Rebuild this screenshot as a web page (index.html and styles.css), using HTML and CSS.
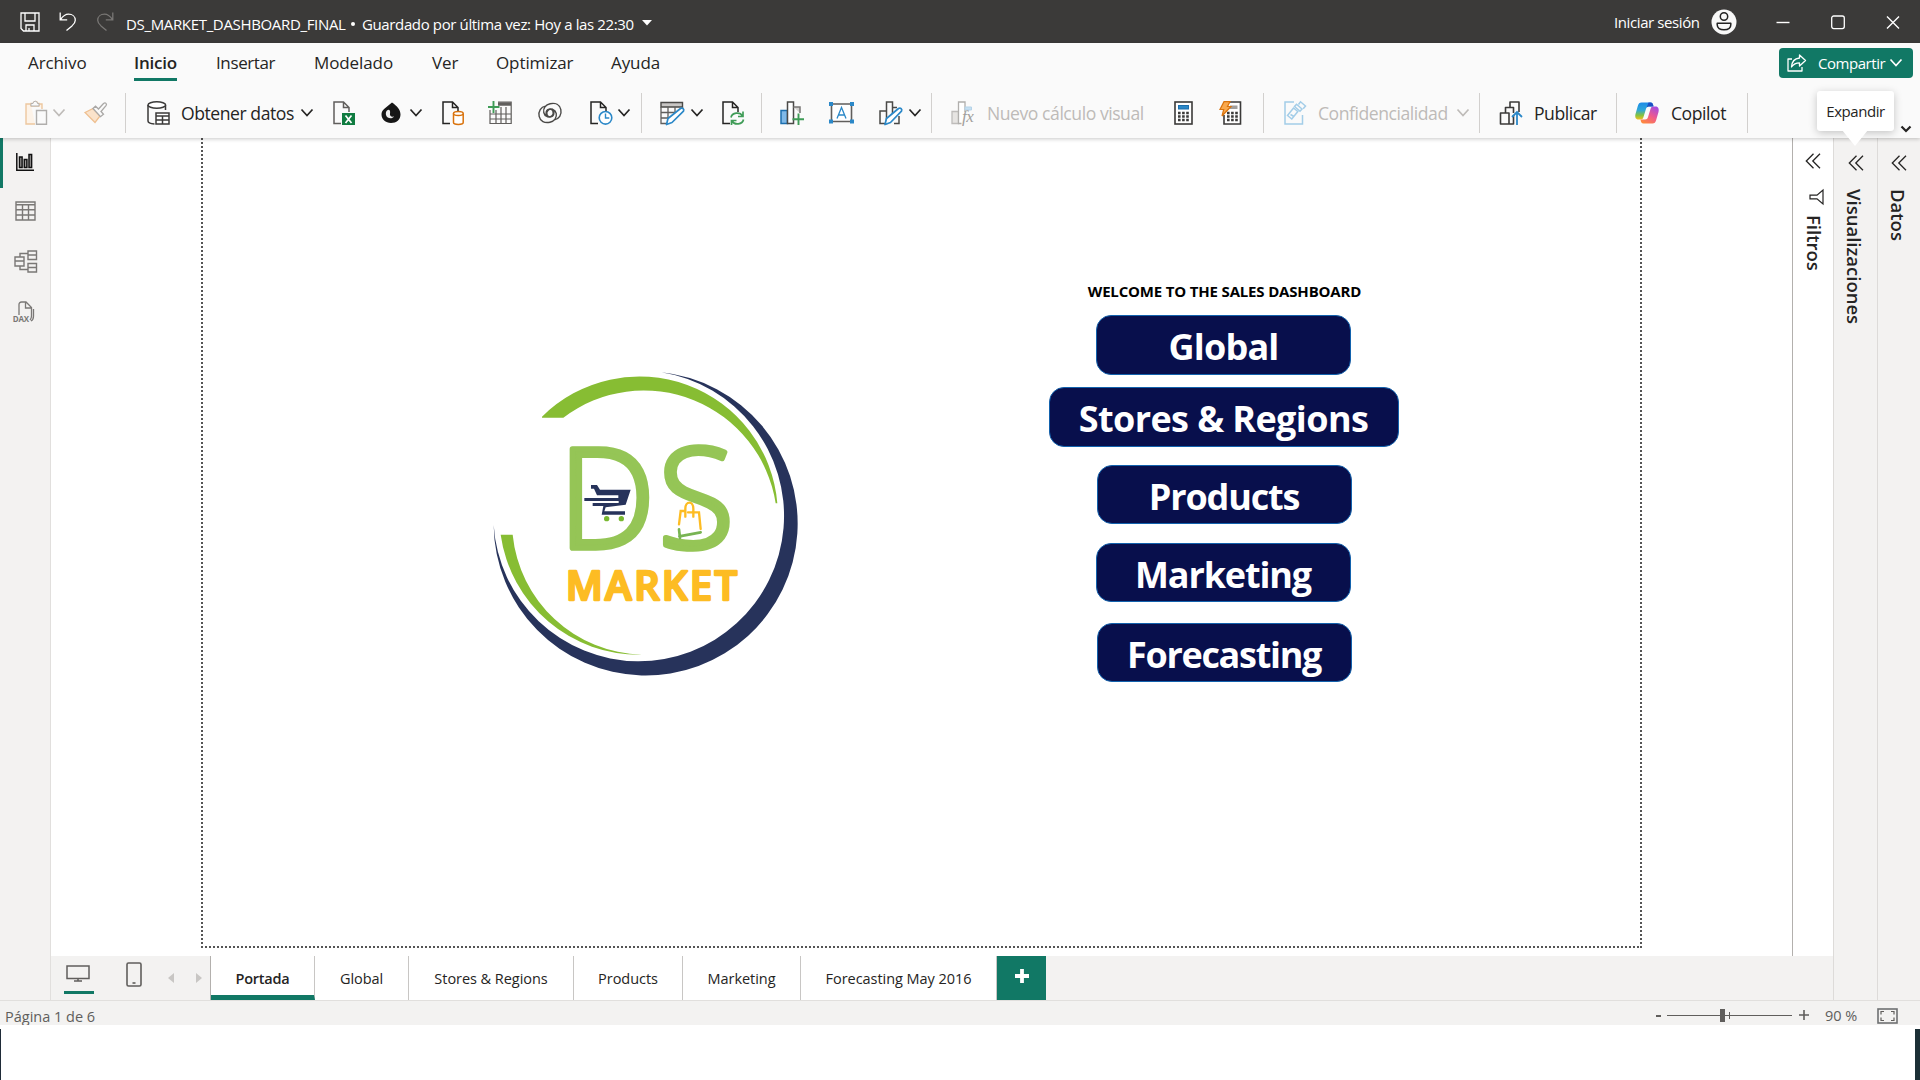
FILE: index.html
```html
<!DOCTYPE html>
<html lang="es">
<head>
<meta charset="utf-8">
<title>DS_MARKET_DASHBOARD_FINAL</title>
<link rel="stylesheet" href="styles.css">
</head>
<body>
<svg class="defs" width="0" height="0">
  <symbol id="chev" viewBox="0 0 14 24"><path d="M1.500 8.500 7 14.500 12.500 8.500" fill="none" stroke="currentColor" stroke-width="1.700"/></symbol>
  <symbol id="dbl" viewBox="0 0 16 16"><path d="M8.500.800 1.300 8l7.200 7.200M15 .800 7.800 8 15 15.200" fill="none" stroke="currentColor" stroke-width="1.300"/></symbol>
  <symbol id="page" viewBox="0 0 22 24"><path d="M8 22.500H1V1h9.500L16 6.500V11M10.500 1v5.500H16" fill="none" stroke="currentColor" stroke-width="1.500"/></symbol>
</svg>
<div class="window">
  <header class="titlebar">
    <svg class="ic-save" width="20" height="20" viewBox="0 0 20 20"><path d="M1 1h18v18H3.500L1 16.500zM5 1v8h10V1M6 19v-6h8v6M9 19v-3" fill="none" stroke="#fff" stroke-width="1.300"/></svg>
    <svg class="ic-undo" width="18" height="19" viewBox="0 0 18 19"><path d="M1.200.500v7.300h7M1.500 7.500C4 4 6.500 2.200 9.500 2.200c4 0 6.800 2.500 6.800 6 0 2.500-1.500 4-3.300 5.700L7.500 18.500" fill="none" stroke="#fff" stroke-width="1.300"/></svg>
    <svg class="ic-redo" width="18" height="19" viewBox="0 0 18 19"><path d="M16.800.500v7.300h-7M16.500 7.500C14 4 11.500 2.200 8.500 2.200c-4 0-6.800 2.500-6.800 6 0 2.500 1.500 4 3.300 5.700l5.500 4.600" fill="none" stroke="#797775" stroke-width="1.300"/></svg>
    <span class="doc-name">DS_MARKET_DASHBOARD_FINAL</span>
    <span class="doc-dot"></span>
    <span class="doc-saved">Guardado por última vez: Hoy a las 22:30</span>
    <svg class="ic-caret" width="10" height="6" viewBox="0 0 10 6"><path d="M0 0h10L5 5.500z" fill="#fff"/></svg>
    <div class="account">
      <span class="signin">Iniciar sesión</span>
      <svg width="26" height="26" viewBox="0 0 26 26"><circle cx="13" cy="13" r="12.500" fill="#f8f8f8"/><circle cx="13" cy="7.500" r="3.700" fill="none" stroke="#222" stroke-width="1.500"/><path d="M6.200 14.200h13.600v1.600c0 3.300-2.800 5-6.800 5s-6.800-1.700-6.800-5z" fill="none" stroke="#222" stroke-width="1.500" stroke-linejoin="round"/></svg>
      <svg class="win-min" width="14" height="16" viewBox="0 0 14 16"><path d="M.500 8.500h13" stroke="#fff" stroke-width="1.400"/></svg>
      <svg class="win-max" width="14" height="16" viewBox="0 0 14 16"><rect x=".700" y="2" width="12.600" height="12.600" rx="2" fill="none" stroke="#fff" stroke-width="1.300"/></svg>
      <svg class="win-close" width="14" height="16" viewBox="0 0 14 16"><path d="M1 2.500l12 12M13 2.500l-12 12" stroke="#fff" stroke-width="1.400"/></svg>
    </div>
  </header>

  <div class="ribbon">
    <nav class="menu">
      <a class="m-file">Archivo</a><a class="m-home active">Inicio</a><a class="m-insert">Insertar</a><a class="m-model">Modelado</a><a class="m-view">Ver</a><a class="m-opt">Optimizar</a><a class="m-help">Ayuda</a>
      <button class="share">
        <svg width="20" height="18" viewBox="0 0 20 18"><path d="M5 5H1v12h14v-4M12.500 1l6 5.500-6 5.500V8.800C8.500 8.800 6.500 10 4.500 13c.300-5 3-8.500 8-9z" fill="none" stroke="#fff" stroke-width="1.300" stroke-linejoin="round"/></svg>
        <span>Compartir</span>
        <svg width="14" height="24"><use href="#chev"/></svg>
      </button>
    </nav>
    <div class="toolbar">
      <div class="group g-clip">
        <svg width="23" height="24" viewBox="0 0 23 24"><path d="M6 3H1v20h9M12 3h5v5M6 5V2.500h2.500a2 2 0 0 1 4 0H14V5z" fill="#fdf3e8" stroke="#edc79f" stroke-width="1.400"/><path d="M6 5V2.500h2a2 2 0 0 1 4.500 0H14V5z" fill="#fafafa" stroke="#b5b3b1"/><path d="M11.500 9.500h10v13.800h-10z" fill="#fafafa" stroke="#b0aeac" stroke-width="1.400"/></svg>
        <svg class="off" width="14" height="24"><use href="#chev"/></svg>
        <svg width="24" height="24" viewBox="0 0 24 24"><path d="M1 11.500 9 7.500l7 7.500-5 6.500z" fill="#fbe3cb" stroke="#eebf90" stroke-width="1.300"/><path d="M9 7.500l2.500-2.300 3 2.800 5-5.500c2-1.500 3.800.400 2.500 2.200L17 10.500l2.500 2.700-3 2.500z" fill="#fafafa" stroke="#aaa8a6" stroke-width="1.300"/></svg>
      </div>
      <div class="group g-data">
        <svg width="23" height="24" viewBox="0 0 23 24"><path d="M18.500 9V4M1 4v16c0 1.800 3 2.800 6.500 3" fill="none" stroke="#3b3a39" stroke-width="1.500"/><ellipse cx="9.800" cy="4" rx="8.800" ry="3.200" fill="#fff" stroke="#3b3a39" stroke-width="1.500"/><path d="M9 12h13v11H9zM9 15h13M9 19h13M15.500 15v8" fill="#fff" stroke="#3b3a39" stroke-width="1.500"/></svg>
        <span>Obtener datos</span>
        <svg width="14" height="24"><use href="#chev"/></svg>
        <svg width="22" height="24" viewBox="0 0 22 24"><use href="#page" width="22" height="24" color="#605e5c"/><rect x="9" y="12" width="13" height="12" fill="#107c41"/><path d="M12.500 14.500l6 7.500M18.500 14.500l-6 7.500" stroke="#fff" stroke-width="1.700"/></svg>
        <svg width="20" height="24" viewBox="0 0 20 24"><path d="M11 1.500C16 5 19.500 8.500 19.500 13.500c0 5-4 8.500-9.500 8.500S.500 18 .500 13.500C.500 9 4 7.500 11 1.500z" fill="#161616"/><path d="M6 9.500c2.500-2 3.500.500 3 3-.400 2.500 1 3.500 4 3-2 3-7 2-8-1.500-.400-1.800 0-3.500 1-4.500z" fill="#eee"/></svg>
        <svg width="14" height="24"><use href="#chev"/></svg>
        <svg width="22" height="24" viewBox="0 0 22 24"><use href="#page" width="22" height="24"/><path d="M11.500 12.500v9c0 2.500 9.700 2.500 9.700 0v-9" fill="#fff" stroke="#d9730d" stroke-width="1.500"/><ellipse cx="16.350" cy="12.500" rx="4.850" ry="2" fill="#fff" stroke="#d9730d" stroke-width="1.500"/></svg>
        <svg width="24" height="24" viewBox="0 0 24 24"><path d="M2 9v13.500h21.200V1H10M2 13h21M2 18h21M8 9v13M13 6v16M18 6v16" fill="none" stroke="#605e5c" stroke-width="1.200"/><path d="M10 3h13" stroke="#605e5c" stroke-width="3.500"/><path d="M5.500 0v12M0 6h11.500" stroke="#3f9c57" stroke-width="1.900"/></svg>
        <svg width="24" height="24" viewBox="0 0 24 24"><g fill="none" stroke="#4a4947" stroke-width="1.400" transform="rotate(-12 12 12)"><path d="M9.500 15.500c-2.500-1-2-7.500 2.500-7.500 4 0 4.300 5.200 1.300 7-3 1.700-7.300-.500-7.300-4.800C6 6 9.500 3 14 3c5.500 0 9.300 3 9.300 8 0 5.500-3.800 8.700-8.300 8.700"/><path d="M14.500 8.500c2.500 1 2 7.500-2.500 7.500-4 0-4.300-5.200-1.300-7 3-1.700 7.300.500 7.300 4.800 0 4.200-3.500 7.200-8 7.200-5.500 0-9.300-3-9.300-8C.700 7.500 4.500 4.300 9 4.300"/></g></svg>
        <svg width="24" height="24" viewBox="0 0 24 24"><use href="#page" width="22" height="24"/><circle cx="15.500" cy="16.800" r="6.300" fill="#fff" stroke="#2b88c8" stroke-width="1.600"/><path d="M15.500 12.500V17h3.800" fill="none" stroke="#2b88c8" stroke-width="1.400"/></svg>
        <svg width="14" height="24"><use href="#chev"/></svg>
      </div>
      <div class="group g-query">
        <svg width="25" height="24" viewBox="0 0 25 24"><path d="M1 1.500h21.500V6H1z" fill="#c8c6c4" stroke="#4a4947" stroke-width="1.400"/><path d="M1 6v16.500h6M22.500 6v2M1 11.500h17M1 17h10M8 6v14M15 6v8" fill="none" stroke="#605e5c" stroke-width="1.300"/><path d="M6.500 23.500l1.500-6L20.500 7.500c2-1 4 .700 3 2.700L12 21.500z" fill="#fff" stroke="#2b88c8" stroke-width="1.700" stroke-linejoin="round"/></svg>
        <svg width="14" height="24"><use href="#chev"/></svg>
        <svg width="23" height="24" viewBox="0 0 23 24"><use href="#page" width="22" height="24"/><g fill="none" stroke="#3f9c57" stroke-width="1.700"><path d="M9 16.500c1-5 9-6 11.500-1.500M21 10.500v5h-5M21.500 18.500c-1 5-9 6-11.500 1.500M9.500 24v-4.500h5"/></g></svg>
      </div>
      <div class="group g-insert">
        <svg width="24" height="24" viewBox="0 0 24 24"><path d="M1 9.500h6.500v13H1z" fill="#7fb9e8" stroke="#1c6fae" stroke-width="1.500"/><path d="M7.500 22.500V1h6v21.500z" fill="#fff" stroke="#4a4947" stroke-width="1.500"/><path d="M13.500 6H20v6" fill="#d2d0ce" stroke="#797775" stroke-width="1.500"/><path d="M18.500 12.500V24M12.500 18.200H24" stroke="#3f9c57" stroke-width="1.900"/></svg>
        <svg width="25" height="24" viewBox="0 0 25 24"><path d="M2.500 3h20v17.500h-20z" fill="#fff" stroke="#605e5c" stroke-width="1.600"/><path d="M0 1h4v4H0zM21 1h4v4h-4zM0 18.500h4v4H0zM21 18.500h4v4h-4z" fill="#2b88c8"/><path d="M8 17.500l4.500-11 4.500 11M9.500 14h6" fill="none" stroke="#2b88c8" stroke-width="1.300"/></svg>
        <svg width="24" height="24" viewBox="0 0 24 24"><path d="M1 22.500V10h6.500v12.500zM7.500 22.500V1h6v12M13.500 6.500H18M15 22.500h5V15" fill="none" stroke="#4a4947" stroke-width="1.500"/><path d="M6 23.500l1.500-6L19.500 7.500c2-1 4 .700 3 2.700L11.500 21.500z" fill="#fff" stroke="#2b88c8" stroke-width="1.700" stroke-linejoin="round"/></svg>
        <svg width="14" height="24"><use href="#chev"/></svg>
      </div>
      <div class="group g-calc">
        <svg width="25" height="24" viewBox="0 0 25 24"><path d="M1 10.500h6.500v12H1z" fill="#e6e4e2" stroke="#bebcba" stroke-width="1.300"/><path d="M10.500 22.500h-3V1H14v10" fill="#fff" stroke="#b0aeac" stroke-width="1.300"/><path d="M14 6h6.500v3H14z" fill="#c5e0f3" stroke="#b5d3e8"/><text x="11" y="21" class="fx">fx</text></svg>
        <span class="off">Nuevo cálculo visual</span>
        <svg width="19" height="24" viewBox="0 0 19 24"><rect x="1" y="1" width="17" height="22" fill="#fff" stroke="#3b3a39" stroke-width="1.600"/><rect x="4.500" y="4.500" width="10" height="3.500" fill="#2b88c8" stroke="#1c6fae"/><path d="M4 12h11M4 15.500h11M4 19h11" stroke="#3b3a39" stroke-width="2.300" stroke-dasharray="2.600 1.500"/></svg>
        <svg width="23" height="24" viewBox="0 0 23 24"><path d="M10 1h11.500v22H5V14" fill="#fff" stroke="#3b3a39" stroke-width="1.600"/><path d="M11 4.500h7.500V8H11z" fill="#a19f9d"/><path d="M8 12h11M8 15.500h11M8 19h11" stroke="#3b3a39" stroke-width="2.300" stroke-dasharray="2.600 1.500"/><path d="M5 .700h6L8.500 5.500H12L3 15l1.700-6.500H1z" fill="#f9a84c" stroke="#d9730d" stroke-width="1.200"/></svg>
      </div>
      <div class="group g-sens off">
        <svg width="23" height="24" viewBox="0 0 23 24"><g fill="none" stroke="#a3cde8" stroke-width="1.500"><path d="M10 1H1v22h17.500V14"/><path d="M3.500 14.500 9.500 7l4.300 3.500-6 7.500zM6.500 13.500l3.500 2"/><path d="M10.500 5.500l5.500 4.800 2-2.300-5.500-4.800zM14.500 3.500l2-2.700 5 4.200-2.300 2.700"/></g></svg>
        <span>Confidencialidad</span>
        <svg width="14" height="24"><use href="#chev"/></svg>
      </div>
      <div class="group g-pub">
        <svg width="24" height="24" viewBox="0 0 24 24"><g fill="#fafafa" stroke="#3b3a39" stroke-width="1.600" stroke-linejoin="round"><path d="M11 6V1h9v10"/><path d="M6.500 12V6.500h8V12"/><path d="M1.500 12h8.500v11H1.500zM10 23h4.500v-9"/></g><path d="M18 24V11.500M13 16l5-5 5 5" fill="none" stroke="#2b88c8" stroke-width="1.800"/></svg>
        <span>Publicar</span>
      </div>
      <div class="group g-cop">
        <svg width="24" height="24" viewBox="0 0 24 24">
          <defs>
            <linearGradient id="cpa" x1="0" y1="0" x2="0" y2="1"><stop offset="0" stop-color="#1b8be8"/><stop offset=".450" stop-color="#2fa8d8"/><stop offset=".750" stop-color="#84c23f"/><stop offset="1" stop-color="#f2c11f"/></linearGradient>
            <linearGradient id="cpb" x1=".800" y1="0" x2=".200" y2="1"><stop offset="0" stop-color="#a44be0"/><stop offset=".500" stop-color="#ef5a8c"/><stop offset="1" stop-color="#ff8a3c"/></linearGradient>
          </defs>
          <path d="M6.500 1.500h9c2 0 2.500 1.500 3 4H14c-2 0-2.700 1-3.200 3L8.500 16c-.500 1.700-1.200 2.500-3 2.500H3.500C.500 18.500-.200 16 .500 13L2.800 5C3.500 2.500 4.500 1.500 6.500 1.500z" fill="url(#cpa)"/>
          <path d="M13.500 1.500h2c2 0 2.500 1.500 3 4H14c-1 0-2 .500-2.500 1.500z" fill="#1c4fc4"/>
          <path d="M17.500 22.500h-9c-2 0-2.500-1.500-3-4H10c2 0 2.700-1 3.200-3L15.500 8c.500-1.700 1.200-2.500 3-2.500h2c3 0 3.700 2.500 3 5.500l-2.300 8c-.700 2.500-1.700 3.500-3.700 3.500z" fill="url(#cpb)"/>
        </svg>
        <span>Copilot</span>
      </div>
      <svg class="collapse" width="12" height="8" viewBox="0 0 12 8"><path d="M1.500 1.500 6 6l4.500-4.500" fill="none" stroke="#252423" stroke-width="2.200"/></svg>
    </div>
    <div class="tooltip">Expandir</div>
  </div>

  <div class="body">
    <aside class="rail">
      <div class="rail-item active"><svg width="18" height="18" viewBox="0 0 18 18"><path d="M.800 0v17.200H18" fill="none" stroke="#111" stroke-width="1.500"/><path d="M3.500 4h2.600v10.500H3.500zM8.300 6.500h2.600v8H8.300zM13 1.500h2.600v13H13z" fill="#a19f9d" stroke="#111" stroke-width="1.500"/></svg></div>
      <div class="rail-item"><svg width="21" height="20" viewBox="0 0 21 20"><path d="M1 1h19v18H1zM1 3.800h19M1 8.800h19M1 14h19M7.500 4v15M13.500 4v15" fill="none" stroke="#7a7876" stroke-width="1.400"/></svg></div>
      <div class="rail-item r3"><svg width="23" height="23" viewBox="0 0 23 23"><path d="M1 7h9v9H1zM1 11h9M14 1h8.500v8.500H14zM14 5h8.500M14 13.500h8.500V22H14zM14 17.500h8.500M6 7V3.500h8M6 16v3.500h8" fill="none" stroke="#7a7876" stroke-width="1.400"/></svg></div>
      <div class="rail-item r4"><svg width="23" height="22" viewBox="0 0 23 22"><path d="M6 14V3.500C6 2 7 1 8.500 1H13l5.500 5.500V15c0 2-.500 3-1.500 4M12.500 1v6h6M20.500 8v7c0 2.500-.500 4-2.500 5" fill="none" stroke="#7a7876" stroke-width="1.300"/><text x="-.300" y="20.500" class="dax" textLength="16.500">DAX</text></svg></div>
    </aside>

    <div class="center">
      <main class="stage">
        <section class="report">
          <svg class="logo" width="330" height="325" viewBox="0 0 990 975" role="img" aria-label="DS Market">
            <path d="M544 37A456 456 0 1 1 41 495A436 436 0 1 0 544 37z" fill="#27335b"/>
            <path d="M186 170A415 415 0 0 1 892 430H887A400 400 0 0 0 250 173H186z" fill="#87bd33"/>
            <path d="M62 524H98A400 400 0 0 0 485 884A418 418 0 0 1 62 524z" fill="#87bd33"/>
            <text class="logo-d" transform="translate(236 564) scale(.980 1)">D</text>
            <text class="logo-s" x="535" y="564">S</text>
            <path d="M597 526l64-8M598 500v24" fill="none" stroke="#fff" stroke-width="14"/>
            <path d="M598 529l64-12M597 508l3 26" fill="none" stroke="#78b453" stroke-width="8" stroke-linecap="round"/>
            <path d="M597 493l5-40h14M642 457h15l5 50M616 470V446c0-24 24-24 24 0v24M624 457h12" fill="none" stroke="#fdbc23" stroke-width="7" stroke-linecap="round"/>
            <path d="M333 375h18l9 14h92l-15 45-60 8-4 12h62v10h-70l5-26h-32v-9h78v-6H313v-9h102v-8h-64l-9-20h-9z" fill="#27335b"/>
            <circle cx="380" cy="476" r="8" fill="#78b82f"/><circle cx="424" cy="476" r="8" fill="#78b82f"/>
            <text class="logo-market" x="257" y="719" textLength="515" lengthAdjust="spacing">MARKET</text>
          </svg>
          <div class="links">
            <h1>WELCOME TO THE SALES DASHBOARD</h1>
            <a class="btn b1">Global</a>
            <a class="btn wide b2">Stores &amp; Regions</a>
            <a class="btn b3">Products</a>
            <a class="btn b4">Marketing</a>
            <a class="btn b5">Forecasting</a>
          </div>
        </section>
        <aside class="pane filters">
          <svg width="16" height="16"><use href="#dbl"/></svg>
          <svg class="funnel" width="15" height="16" viewBox="0 0 15 16"><path d="M14 1v14L8 9.800H1V6.200h7z" fill="none" stroke="#252423" stroke-width="1.200"/></svg>
          <span>Filtros</span>
        </aside>
      </main>
      <footer class="pages">
        <div class="device on"><svg width="24" height="17" viewBox="0 0 24 17"><path d="M1 1h22v12.500H1zM12 13.500V16M8 16h8" fill="none" stroke="#605e5c" stroke-width="1.500"/></svg></div>
        <div class="device phone"><svg width="16" height="25" viewBox="0 0 16 25"><rect x="1" y="1" width="14" height="23" rx="1.500" fill="none" stroke="#605e5c" stroke-width="1.600"/><path d="M6.500 21h3" stroke="#605e5c" stroke-width="1.600"/></svg></div>
        <svg class="prev" width="6" height="10" viewBox="0 0 6 10"><path d="M6 0v10L0 5z" fill="#c8c6c4"/></svg>
        <svg class="next" width="6" height="10" viewBox="0 0 6 10"><path d="M0 0v10l6-5z" fill="#c8c6c4"/></svg>
        <div class="tabs">
          <a class="tab sel">Portada</a><a class="tab">Global</a><a class="tab">Stores &amp; Regions</a><a class="tab">Products</a><a class="tab">Marketing</a><a class="tab">Forecasting May 2016</a>
        </div>
        <button class="add"><svg width="14" height="14" viewBox="0 0 14 14"><path d="M7 0v14M0 7h14" stroke="#fff" stroke-width="3.800"/></svg></button>
      </footer>
    </div>

    <aside class="pane vis"><svg width="16" height="16"><use href="#dbl"/></svg><span>Visualizaciones</span></aside>
    <aside class="pane data"><svg width="16" height="16"><use href="#dbl"/></svg><span>Datos</span></aside>
  </div>

  <div class="status">
    <span class="page-no">Página 1 de 6</span>
    <div class="zoom">
      <span class="sign-minus"></span>
      <svg width="126" height="14" viewBox="0 0 126 14"><path d="M0 7.500h125M62.500 4v7" stroke="#605e5c" fill="none"/><rect x="53" y="1" width="5" height="13" fill="#605e5c"/></svg>
      <svg class="sign-plus" width="10" height="10" viewBox="0 0 10 10"><path d="M5 0v10M0 5h10" stroke="#605e5c" stroke-width="1.600"/></svg>
      <span class="pct">90 %</span>
      <svg width="21" height="16" viewBox="0 0 21 16"><rect x="1" y="1" width="19" height="14" fill="none" stroke="#6e7072" stroke-width="1.600"/><path d="M4 6.500v-3h3M14 3.500h3v3M17 9.500v3h-3M7 12.500H4v-3" fill="none" stroke="#605e5c" stroke-width="1.200"/></svg>
    </div>
  </div>
  <div class="desktop"><div class="sheet"></div></div>
</div>
</body>
</html>
```
FILE: styles.css
```css
* { box-sizing: border-box; }
body { margin: 0; font-family: "Open Sans", "Noto Sans", sans-serif; color: #252423; background: #fff; }
svg { display: block; flex: none; overflow: visible; }
.defs { position: absolute; }
a, span { white-space: nowrap; }
button { border: 0; padding: 0; font: inherit; }
.window { width: 1920px; height: 1080px; overflow: hidden; display: flex; flex-direction: column; }

.titlebar { height: 43px; background: #3b3a39; color: #fff; display: flex; align-items: center; padding-left: 20px; font-size: 15px; letter-spacing: -.34px; flex: none; }
.ic-undo { margin-left: 19px; }
.ic-redo { margin-left: 19px; }
.doc-name { margin-left: 12px; padding-top: 5px; width: 219px; }
.doc-dot { width: 4px; height: 4px; border-radius: 50%; background: #fff; margin: 4px 7px 0 6px; }
.doc-saved { padding-top: 5px; width: 280px; letter-spacing: -.370px; }
.ic-caret { margin-top: 3px; }
.account { margin-left: auto; display: flex; align-items: center; padding-right: 20px; }
.signin { width: 97px; letter-spacing: -.400px; }
.win-min { margin-left: 39px; }
.win-max { margin-left: 41px; }
.win-close { margin-left: 41px; }

.ribbon { height: 95px; background: #fafafa; flex: none; position: relative; z-index: 2; box-shadow: 0 1px 4px rgba(0, 0, 0, .22); }
.menu { height: 50px; display: flex; font-size: 17px; letter-spacing: -.100px; padding-left: 28px; }
.menu a { line-height: 40px; height: 38px; }
.m-file { width: 106px; }
.m-home { width: 43px; margin-right: 39px; }
.m-home.active { font-weight: 600; letter-spacing: -.220px; border-bottom: 3px solid #117865; }
.m-insert { width: 98px; letter-spacing: -.380px; }
.m-model { width: 118px; }
.m-view { width: 64px; }
.m-opt { width: 115px; }
.share { margin: 5px 7px 0 auto; width: 134px; height: 30px; background: #117865; color: #fff; border-radius: 4px; display: flex; align-items: center; padding-left: 8px; font-size: 15px; letter-spacing: -.450px; }
.share span { width: 71px; margin-left: 11px; text-align: left; }
.toolbar { display: flex; height: 40px; font-size: 17.600px; letter-spacing: -.460px; }
.group { box-sizing: content-box; display: grid; align-items: center; border-right: 1px solid #d2d0ce; color: #252423; }
.group.off, .off { color: #bebbb8; }
.g-clip { padding-left: 25px; grid-template-columns: 27px 32px 41px; }
.g-data { padding-left: 21px; grid-template-columns: 34px 119px 33px 48px 28px 33px 46px 50px 52px 27px 24px; }
.g-query { padding-left: 18px; grid-template-columns: 30px 32px 39px; }
.g-insert { padding-left: 18px; grid-template-columns: 49px 50px 29px 23px; }
.g-calc { padding-left: 19px; grid-template-columns: 36px 187px 45px 44px; }
.g-sens { padding-left: 20px; grid-template-columns: 34px 138px 23px; }
.g-pub { padding-left: 19px; grid-template-columns: 35px 82px; }
.g-cop { padding-left: 18px; grid-template-columns: 36px 76px; }
.fx { font: italic 17px "Liberation Serif", serif; fill: #a19f9d; }
.collapse { margin: 32px 8px 0 auto; }
.tooltip { position: absolute; left: 1817px; top: 48px; width: 77px; height: 40px; background: #fff; border-radius: 3px; box-shadow: 0 2px 9px rgba(0, 0, 0, .22); font-size: 15px; letter-spacing: -.450px; line-height: 41px; text-align: center; }
.tooltip::after { content: ""; position: absolute; left: 25px; top: 39px; border: 13px solid transparent; border-top: 16px solid #fff; border-bottom: 0; }

.body { display: flex; height: 862px; flex: none; }
.rail { width: 51px; background: #f3f2f1; border-right: 1px solid #e1dfdd; flex: none; }
.rail-item { height: 50px; padding: 15px 0 0 15px; }
.rail-item.active { border-left: 3px solid #117865; padding-left: 13px; }
.rail-item:nth-child(2) { padding-top: 13px; }
.r3 { padding: 12px 0 0 14px; }
.r4 { padding: 13px 0 0 13px; }
.dax { font: 700 8px "Open Sans", sans-serif; fill: #7a7876; }

.center { width: 1782px; display: flex; flex-direction: column; flex: none; }
.stage { height: 818px; display: flex; background: #fff; }
.report {
  width: 1441px; height: 810px; margin-left: 150px; display: flex; padding-left: 279px;
  background:
    repeating-linear-gradient(#555 0 2px, transparent 2px 4px) left / 2px 100% no-repeat,
    repeating-linear-gradient(#555 0 2px, transparent 2px 4px) right / 2px 100% no-repeat,
    repeating-linear-gradient(90deg, #555 0 2px, transparent 2px 4px) bottom / 100% 2px no-repeat;
}
.logo { margin-top: 222px; }
.logo-d, .logo-s { font: 300 417px "Open Sans", sans-serif; fill: #95c556; stroke: #95c556; stroke-width: 17px; stroke-linejoin: round; }
.logo-market { font: 600 121px "Open Sans", sans-serif; fill: #fdbc23; stroke: #fdbc23; stroke-width: 7px; stroke-linejoin: round; }
.links { margin-left: 238px; width: 351px; display: flex; flex-direction: column; align-items: center; }
.links h1 { margin: 143px 0 13px 2px; font-size: 15px; line-height: 21px; font-weight: 700; letter-spacing: -.170px; color: #000; white-space: nowrap; }
.btn { width: 255px; height: 59px; margin-left: 1px; border: 1px solid #1262ad; border-radius: 15px; background: #080f4c; color: #fff; font-size: 36px; font-weight: 700; letter-spacing: -1.150px; line-height: 62px; text-align: center; }
.btn.wide { width: 350px; height: 60px; letter-spacing: -.600px; }
.b1 { height: 60px; margin-right: 1px; letter-spacing: -.800px; }
.b2 { margin: 12px 0 0; }
.b3 { margin-top: 18px; }
.b4 { margin: 19px 1px 0 0; }
.b5 { margin-top: 21px; letter-spacing: -1.300px; }

.pane { border-left: 1px solid #dddbd9; background: #f3f2f1; display: flex; flex-direction: column; align-items: flex-start; padding: 17px 0 0 13px; flex: none; }
.pane span { writing-mode: vertical-rl; font-size: 18.500px; font-weight: 600; line-height: 22px; margin: 18px 0 0 -4px; }
.filters { background: #fff; border-left-color: #b3b0ad; width: 41px; margin-left: auto; padding: 15px 0 0 12px; height: 818px; }
.funnel { margin: 20px 0 0 4px; }
.filters span { margin: 10px 0 0 -2px; }
.vis { width: 44px; padding-left: 14px; }
.vis span { margin-left: -5px; }
.data { width: 43px; }

.pages { height: 44px; background: #f3f2f1; display: flex; }
.device { width: 30px; height: 38px; margin-left: 13px; padding: 9px 0 0 2px; }
.device.on { border-bottom: 3px solid #117865; }
.phone { margin-left: 32px; padding: 6px 0 0 0; width: 16px; }
.prev { margin: 17px 0 0 26px; }
.next { margin: 17px 0 0 22px; }
.tabs { margin-left: 8px; display: grid; grid-template-columns: 104px 94px 165px 109px 118px 196px; border-left: 1px solid #b3b0ad; }
.tab { background: #fff; border-right: 1px solid #c8c6c4; text-align: center; font-size: 14.500px; letter-spacing: -.050px; line-height: 45px; height: 44px; }
.tab.sel { font-weight: 600; border-bottom: 5px solid #117865; letter-spacing: -.250px; }
.add { width: 49px; background: #117865; display: flex; justify-content: center; padding-top: 13px; }

.status { height: 25px; flex: none; background: #f3f2f1; border-top: 1px solid #e1dfdd; display: flex; color: #605e5c; font-size: 14.500px; }
.page-no { padding: 6px 0 0 5px; line-height: 20px; }
.zoom { display: flex; margin-left: auto; padding: 7px 22px 0 0; }
.sign-minus { width: 5px; height: 2px; background: #605e5c; margin: 7px 6px 0 0; }
.sign-plus { margin: 2px 16px 0 6px; }
.pct { line-height: 15px; width: 52px; }
.desktop { flex: 1; background: #fff; display: flex; padding: 4px 0 0; }
.sheet { flex: 1; border-left: 1px solid #1f2b38; border-right: 5px solid #1c2f36; }
```
